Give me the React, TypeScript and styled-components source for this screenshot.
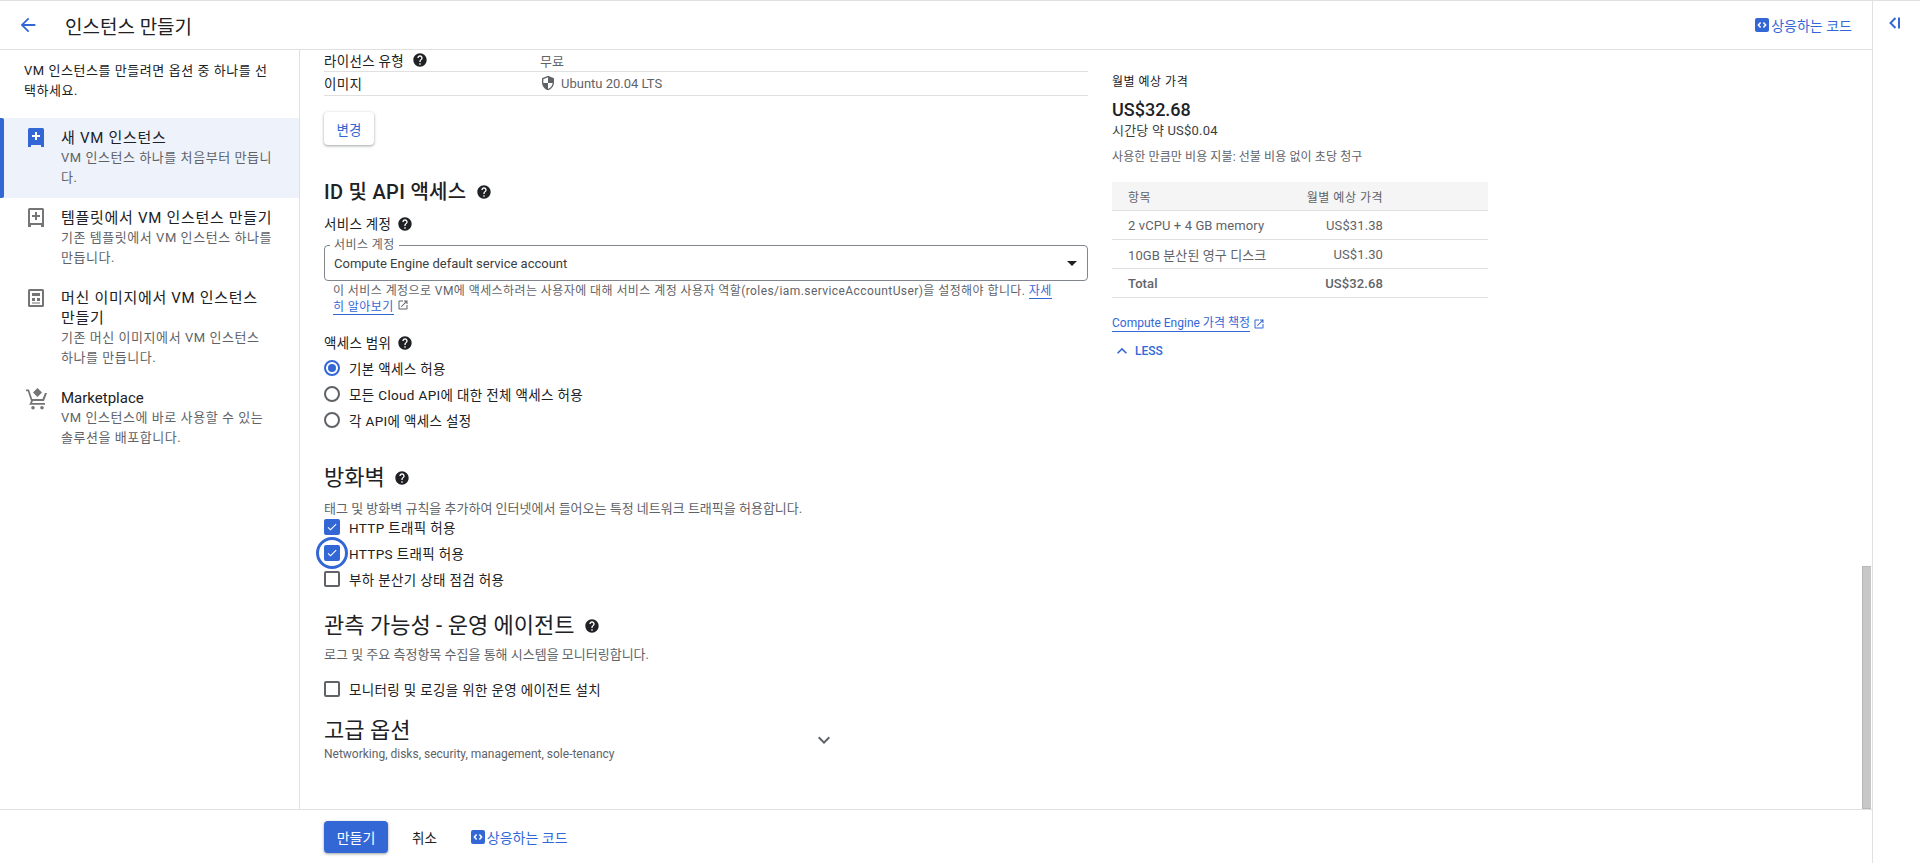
import styled, {createGlobalStyle} from 'styled-components';

const GlobalStyle = createGlobalStyle`
  html, body {
    margin: 0;
    height: 100%;
    overflow: hidden;
    background: #fff;
  }

  body {
    font-family: Roboto, "Noto Sans CJK KR", sans-serif;
    font-size: 13px;
    color: #202124;
  }
`;

const BLUE = '#3367d6';
const GREY = '#5f6368';
const LINE = '#e0e0e0';

const Page = styled.div`
  display: flex;
  height: 863px;
  border-top: 1px solid ${LINE};
  box-sizing: border-box;
`;

const Workspace = styled.div`
  flex: 1;
  min-width: 0;
  display: flex;
  flex-direction: column;
`;

const Rail = styled.aside`
  width: 44px;
  border-left: 1px solid ${LINE};
  display: flex;
  justify-content: center;
  padding: 15px 3px 0 0;
`;

const Header = styled.header`
  height: 48px;
  flex: none;
  display: flex;
  align-items: center;
  border-bottom: 1px solid ${LINE};
  padding: 0 20px 0 17px;
`;

const BackLink = styled.span`
  display: flex;
  width: 48px;
  color: ${BLUE};
`;

const PageTitle = styled.h1`
  flex: 1;
  margin: 0;
  font-size: 19px;
  font-weight: 400;
`;

const CodeLink = styled.span`
  display: flex;
  align-items: center;
  gap: 2px;
  color: ${BLUE};
  font-size: 14px;
`;

const Body = styled.div`
  flex: 1;
  min-height: 0;
  display: flex;
`;

const Nav = styled.nav`
  width: 299px;
  flex: none;
  border-right: 1px solid ${LINE};
`;

const NavIntro = styled.p`
  margin: 0;
  padding: 11px 24px 17px;
  font-size: 13px;
  line-height: 20px;
  letter-spacing: 0.55px;
`;

const NavItem = styled.div<{$active?: boolean}>`
  position: relative;
  display: flex;
  padding: 10px 24px;
  background: ${({$active}) => ($active ? '#eef2fb' : 'transparent')};

  ${({$active}) =>
    $active &&
    `
      &::before {
        content: '';
        position: absolute;
        left: 0;
        top: 0;
        bottom: 0;
        width: 4px;
        background: ${BLUE};
        border-radius: 0 2px 2px 0;
      }
    `}
`;

const NavIcon = styled.span<{$active?: boolean}>`
  width: 33px;
  flex: none;
  padding-left: 4px;
  color: ${({$active}) => ($active ? BLUE : '#757575')};
`;

const NavTitle = styled.div<{$latin?: boolean}>`
  font-size: 15px;
  line-height: 20px;
  letter-spacing: ${({$latin}) => ($latin ? 0 : '0.7px')};
  color: #202124;
`;

const NavDesc = styled.div`
  font-size: 13px;
  line-height: 20px;
  letter-spacing: 0.55px;
  color: ${GREY};
`;

const Content = styled.div`
  flex: 1;
  min-width: 0;
  display: flex;
`;

const Form = styled.main`
  width: 764px;
  flex: none;
  margin-left: 24px;
`;

const InfoRow = styled.div<{$height: number; $lift: number}>`
  display: grid;
  grid-template-columns: 216px 1fr;
  align-items: center;
  height: ${({$height}) => $height}px;
  padding-bottom: ${({$lift}) => $lift}px;
  box-sizing: border-box;
  border-bottom: 1px solid ${LINE};
  font-size: 13px;
`;

const InfoLabel = styled.span`
  display: flex;
  align-items: center;
  gap: 8px;
  font-size: 13.5px;
  letter-spacing: 0.3px;
`;

const InfoValue = styled.span`
  display: flex;
  align-items: center;
  gap: 5px;
  color: ${GREY};
`;

const RaisedButton = styled.button`
  display: block;
  margin-top: 16px;
  width: 50px;
  height: 33px;
  padding: 0;
  background: #fff;
  color: ${BLUE};
  border: none;
  border-radius: 4px;
  font: inherit;
  font-size: 13.5px;
  box-shadow: 0 1px 2px rgba(60, 64, 67, 0.3), 0 1px 3px 1px rgba(60, 64, 67, 0.15);
`;

const SectionTitle = styled.h2<{$top: number; $medium?: boolean}>`
  display: flex;
  align-items: center;
  gap: 9px;
  margin: ${({$top}) => $top}px 0 0;
  font-size: ${({$medium}) => ($medium ? 20 : 22)}px;
  line-height: 28px;
  font-weight: ${({$medium}) => ($medium ? 500 : 400)};
  letter-spacing: ${({$medium}) => ($medium ? '0.3px' : 0)};
`;

const FieldLabel = styled.div<{$top: number}>`
  display: flex;
  align-items: center;
  gap: 6px;
  margin-top: ${({$top}) => $top}px;
  font-size: 13.5px;
  line-height: 20px;
  letter-spacing: 0.3px;
`;

const SelectBox = styled.div`
  position: relative;
  display: flex;
  align-items: center;
  justify-content: space-between;
  height: 36px;
  margin-top: 11px;
  padding: 0 10px 0 9px;
  border: 1px solid #80868b;
  border-radius: 4px;
  box-sizing: border-box;
  font-size: 13px;
  color: #3c4043;
`;

const SelectLegend = styled.span`
  position: absolute;
  left: 5px;
  top: -7px;
  padding: 0 4px;
  background: #fff;
  font-size: 12px;
  line-height: 12px;
  letter-spacing: 0.4px;
  color: ${GREY};
`;

const Caret = styled.span`
  width: 0;
  height: 0;
  border-left: 5px solid transparent;
  border-right: 5px solid transparent;
  border-top: 5px solid #202124;
`;

const Hint = styled.p`
  margin: 2px 32px 0 9px;
  font-size: 12px;
  line-height: 16px;
  letter-spacing: 0.42px;
  color: ${GREY};
`;

const TextLink = styled.a`
  color: ${BLUE};
  border-bottom: 1px solid ${BLUE};
`;

const ChoiceList = styled.div<{$gap: number; $top: number}>`
  display: flex;
  flex-direction: column;
  gap: ${({$gap}) => $gap}px;
  margin-top: ${({$top}) => $top}px;
`;

const Choice = styled.label`
  display: flex;
  align-items: center;
  gap: 9px;
  height: 20px;
  font-size: 13.5px;
  letter-spacing: 0.35px;
`;

const Radio = styled.span<{$on?: boolean}>`
  width: 16px;
  height: 16px;
  flex: none;
  box-sizing: border-box;
  border-radius: 50%;
  border: 2px solid ${({$on}) => ($on ? BLUE : GREY)};
  display: flex;
  align-items: center;
  justify-content: center;

  &::after {
    content: '';
    width: 8px;
    height: 8px;
    border-radius: 50%;
    background: ${({$on}) => ($on ? BLUE : 'transparent')};
  }
`;

const CheckBox = styled.span<{$on?: boolean; $focus?: boolean}>`
  position: relative;
  width: 16px;
  height: 16px;
  flex: none;
  box-sizing: border-box;
  border-radius: 2px;
  border: 2px solid ${({$on}) => ($on ? BLUE : GREY)};
  background: ${({$on}) => ($on ? BLUE : '#fff')};
  color: #fff;
  display: flex;
  align-items: center;
  justify-content: center;

  ${({$focus}) =>
    $focus &&
    `
      &::after {
        content: '';
        position: absolute;
        left: -10px;
        top: -10px;
        width: 32px;
        height: 32px;
        box-sizing: border-box;
        border: 3px solid ${BLUE};
        border-radius: 50%;
      }
    `}
`;

const SectionDesc = styled.p<{$top: number}>`
  margin: ${({$top}) => $top}px 0 0;
  font-size: 13px;
  line-height: 16px;
  color: ${GREY};
`;

const Advanced = styled.div`
  display: grid;
  grid-template-columns: 1fr auto;
  width: 512px;
  margin-top: 18px;
`;

const AdvancedTitle = styled.div`
  font-size: 22px;
  line-height: 28px;
`;

const AdvancedSub = styled.div`
  margin-top: 1px;
  font-size: 12px;
  line-height: 16px;
  color: ${GREY};
  grid-column: 1;
`;

const Chevron = styled.span`
  grid-column: 2;
  grid-row: 1 / span 2;
  align-self: center;
  display: flex;
  color: ${GREY};
`;

const Summary = styled.aside`
  width: 376px;
  flex: none;
  margin-left: 24px;
  padding-top: 24px;
`;

const SummaryLabel = styled.div`
  font-size: 12px;
  line-height: 16px;
  letter-spacing: 0.5px;
`;

const SummaryPrice = styled.div`
  margin-top: 8px;
  font-size: 18px;
  line-height: 24px;
  font-weight: 500;
`;

const SummaryHourly = styled.div`
  font-size: 13px;
  line-height: 18px;
  letter-spacing: 0.2px;
  color: #3c4043;
`;

const SummaryNote = styled.div`
  margin-top: 9px;
  font-size: 12px;
  line-height: 16px;
  letter-spacing: 0.1px;
  color: ${GREY};
`;

const PriceTable = styled.table`
  width: 100%;
  margin-top: 17px;
  border-collapse: collapse;
  font-size: 13px;
  letter-spacing: 0.1px;
  color: ${GREY};
`;

const HeadCell = styled.th<{$right?: boolean}>`
  height: 28px;
  padding: 0 0 0 16px;
  background: #f5f5f5;
  border-bottom: 1px solid ${LINE};
  font-size: 12px;
  letter-spacing: 0.5px;
  font-weight: 400;
  text-align: ${({$right}) => ($right ? 'right' : 'left')};
`;

const Cell = styled.td<{$right?: boolean; $bold?: boolean}>`
  height: 28px;
  padding: 0 0 0 16px;
  border-bottom: 1px solid ${LINE};
  font-weight: ${({$bold}) => ($bold ? 500 : 400)};
  text-align: ${({$right}) => ($right ? 'right' : 'left')};
`;

const FillCell = styled.td`
  width: 103px;
  border-bottom: 1px solid ${LINE};
`;

const FillHead = styled.th`
  width: 103px;
  background: #f5f5f5;
  border-bottom: 1px solid ${LINE};
`;

const PriceLink = styled.div`
  display: flex;
  align-items: center;
  gap: 3px;
  margin-top: 17px;
  color: ${BLUE};
  font-size: 12px;
  line-height: 16px;
`;

const LessToggle = styled.div`
  display: flex;
  align-items: center;
  gap: 3px;
  margin-top: 9px;
  color: ${BLUE};
  font-size: 12px;
  font-weight: 500;
`;

const ScrollTrack = styled.div`
  margin-left: auto;
  margin-right: 1px;
  width: 9px;
  display: flex;
  align-items: flex-end;
`;

const ScrollThumb = styled.div`
  width: 100%;
  height: 243px;
  background: #c8c8c8;
  border: 1px solid #b8b8b8;
  border-width: 1px 0 1px 1px;
  box-sizing: border-box;
`;

const Footer = styled.footer`
  height: 53px;
  flex: none;
  display: flex;
  align-items: center;
  border-top: 1px solid ${LINE};
  padding-left: 324px;
`;

const PrimaryButton = styled.button`
  width: 64px;
  height: 32px;
  padding: 0;
  background: ${BLUE};
  color: #fff;
  border: none;
  border-radius: 4px;
  font: inherit;
  font-size: 14px;
  box-shadow: 0 1px 2px rgba(60, 64, 67, 0.3), 0 1px 3px 1px rgba(60, 64, 67, 0.15);
`;

const CancelLink = styled.span`
  margin: 0 34px 0 24px;
  font-size: 13.5px;
`;

const Icon = ({d, size = 24}: {d: string; size?: number}) => (
  <svg width={size} height={size} viewBox="0 0 24 24" fill="currentColor">
    <path d={d} />
  </svg>
);

const HELP =
  'M12 2C6.48 2 2 6.48 2 12s4.48 10 10 10 10-4.48 10-10S17.52 2 12 2zm1 17h-2v-2h2v2zm2.07-7.75l-.9.92C13.45 12.9 13 13.5 13 15h-2v-.5c0-1.1.45-2.1 1.17-2.83l1.24-1.26c.37-.36.59-.86.59-1.41 0-1.1-.9-2-2-2s-2 .9-2 2H8c0-2.21 1.79-4 4-4s4 1.79 4 4c0 .88-.36 1.68-.93 2.25z';
const BACK = 'M20 11H7.83l5.59-5.59L12 4l-8 8 8 8 1.41-1.41L7.83 13H20v-2z';
const SHIELD =
  'M12 1L3 5v6c0 5.55 3.84 10.74 9 12 5.16-1.26 9-6.45 9-12V5l-9-4zm0 10.99h7c-.53 4.12-3.28 7.79-7 8.94V12H5V6.3l7-3.11v8.8z';
const OPEN_NEW =
  'M19 19H5V5h7V3H5c-1.11 0-2 .9-2 2v14c0 1.1.89 2 2 2h14c1.1 0 2-.9 2-2v-7h-2v7zM14 3v2h3.59l-9.83 9.83 1.41 1.41L19 6.41V10h2V3h-7z';
const EXPAND_MORE = 'M16.59 8.59L12 13.17 7.41 8.59 6 10l6 6 6-6z';
const EXPAND_LESS = 'M12 8l-6 6 1.41 1.41L12 10.83l4.59 4.58L18 14z';
const CHECK = 'M9 16.17L4.83 12l-1.42 1.41L9 19 21 7l-1.41-1.41z';

const Help = ({size = 16}: {size?: number}) => <Icon d={HELP} size={size} />;

const CodeIcon = () => (
  <svg width="14" height="14" viewBox="0 0 14 14">
    <rect width="14" height="14" rx="2" fill={BLUE} />
    <path d="M5.6 4.6L3.4 7l2.2 2.4M8.4 4.6L10.6 7 8.4 9.4" fill="none" stroke="#fff" strokeWidth="1.5" />
  </svg>
);

const NewVmIcon = () => (
  <svg width="16" height="20" viewBox="0 0 16 20">
    <path d="M1.500 0h13A1.500 1.500 0 0 1 16 1.500V19h-3v-2H3v2H0V1.500A1.500 1.500 0 0 1 1.500 0z" fill="currentColor" />
    <path d="M7 4h2v3h3v2H9v3H7V9H4V7h3z" fill="#fff" />
  </svg>
);

const TemplateIcon = () => (
  <svg width="16" height="20" viewBox="0 0 16 20">
    <path
      d="M1.500 0h13A1.500 1.500 0 0 1 16 1.500V19h-3v-2H3v2H0V1.500A1.500 1.500 0 0 1 1.500 0zM2 2v13h12V2z"
      fill="currentColor"
      fillRule="evenodd"
    />
    <path d="M7 4h2v3h3v2H9v3H7V9H4V7h3z" fill="currentColor" />
  </svg>
);

const ImageIcon = () => (
  <svg width="16" height="20" viewBox="0 0 16 20">
    <path
      d="M1.500 1h13A1.500 1.500 0 0 1 16 2.500v15a1.500 1.500 0 0 1-1.500 1.500h-13A1.500 1.500 0 0 1 0 17.500v-15A1.500 1.500 0 0 1 1.500 1zM2 3v14h12V3z"
      fill="currentColor"
      fillRule="evenodd"
    />
    <path d="M4 5h8v3H4zM4 10h3v3H4zM9 10h3v3H9zM4 14.500h8v1H4z" fill="currentColor" />
  </svg>
);

const CartIcon = () => (
  <svg width="22" height="22" viewBox="0 0 22 22" style={{marginLeft: -2}}>
    <path d="M11.500 0l4.500 4.500-4.500 4.500L7 4.500z" fill="currentColor" />
    <path d="M0 1.500h3l3.200 9.500h10.300l2.500-6h2l-3 8H7l-1 2h13v1.800H3.200l1.800-3.800L1.800 3.300H0z" fill="currentColor" />
    <circle cx="7" cy="19.800" r="1.800" fill="currentColor" />
    <circle cx="16" cy="19.800" r="1.800" fill="currentColor" />
  </svg>
);

const Tick = () => <Icon d={CHECK} size={14} />;

export default function App() {
  return (
    <Page>
      <GlobalStyle />
      <Workspace>
        <Header>
          <BackLink>
            <Icon d={BACK} size={22} />
          </BackLink>
          <PageTitle>인스턴스 만들기</PageTitle>
          <CodeLink>
            <CodeIcon />
            상응하는 코드
          </CodeLink>
        </Header>
        <Body>
          <Nav>
            <NavIntro>VM 인스턴스를 만들려면 옵션 중 하나를 선택하세요.</NavIntro>
            <NavItem $active>
              <NavIcon $active>
                <NewVmIcon />
              </NavIcon>
              <div>
                <NavTitle>새 VM 인스턴스</NavTitle>
                <NavDesc>VM 인스턴스 하나를 처음부터 만듭니다.</NavDesc>
              </div>
            </NavItem>
            <NavItem>
              <NavIcon>
                <TemplateIcon />
              </NavIcon>
              <div>
                <NavTitle>템플릿에서 VM 인스턴스 만들기</NavTitle>
                <NavDesc>기존 템플릿에서 VM 인스턴스 하나를 만듭니다.</NavDesc>
              </div>
            </NavItem>
            <NavItem>
              <NavIcon>
                <ImageIcon />
              </NavIcon>
              <div>
                <NavTitle>머신 이미지에서 VM 인스턴스 만들기</NavTitle>
                <NavDesc>기존 머신 이미지에서 VM 인스턴스 하나를 만듭니다.</NavDesc>
              </div>
            </NavItem>
            <NavItem>
              <NavIcon>
                <CartIcon />
              </NavIcon>
              <div>
                <NavTitle $latin>Marketplace</NavTitle>
                <NavDesc>VM 인스턴스에 바로 사용할 수 있는 솔루션을 배포합니다.</NavDesc>
              </div>
            </NavItem>
          </Nav>
          <Content>
            <Form>
              <InfoRow $height={22} $lift={3}>
                <InfoLabel>
                  라이선스 유형 <Help />
                </InfoLabel>
                <InfoValue>무료</InfoValue>
              </InfoRow>
              <InfoRow $height={24} $lift={1}>
                <InfoLabel>이미지</InfoLabel>
                <InfoValue>
                  <Icon d={SHIELD} size={16} />
                  Ubuntu 20.04 LTS
                </InfoValue>
              </InfoRow>
              <RaisedButton>변경</RaisedButton>
              <SectionTitle $top={33} $medium>
                ID 및 API 액세스 <Help />
              </SectionTitle>
              <FieldLabel $top={8}>
                서비스 계정 <Help />
              </FieldLabel>
              <SelectBox>
                <SelectLegend>서비스 계정</SelectLegend>
                Compute Engine default service account
                <Caret />
              </SelectBox>
              <Hint>
                이 서비스 계정으로 VM에 액세스하려는 사용자에 대해 서비스 계정 사용자 역할(roles/iam.serviceAccountUser)을 설정해야 합니다.{' '}
                <TextLink>자세히 알아보기</TextLink> <Icon d={OPEN_NEW} size={12} />
              </Hint>
              <FieldLabel $top={18}>
                액세스 범위 <Help />
              </FieldLabel>
              <ChoiceList $gap={6} $top={5}>
                <Choice>
                  <Radio $on />
                  기본 액세스 허용
                </Choice>
                <Choice>
                  <Radio />
                  모든 Cloud API에 대한 전체 액세스 허용
                </Choice>
                <Choice>
                  <Radio />각 API에 액세스 설정
                </Choice>
              </ChoiceList>
              <SectionTitle $top={34}>
                방화벽 <Help />
              </SectionTitle>
              <SectionDesc $top={9}>태그 및 방화벽 규칙을 추가하여 인터넷에서 들어오는 특정 네트워크 트래픽을 허용합니다.</SectionDesc>
              <ChoiceList $gap={6} $top={0}>
                <Choice>
                  <CheckBox $on>
                    <Tick />
                  </CheckBox>
                  HTTP 트래픽 허용
                </Choice>
                <Choice>
                  <CheckBox $on $focus>
                    <Tick />
                  </CheckBox>
                  HTTPS 트래픽 허용
                </Choice>
                <Choice>
                  <CheckBox />
                  부하 분산기 상태 점검 허용
                </Choice>
              </ChoiceList>
              <SectionTitle $top={23}>
                관측 가능성 - 운영 에이전트 <Help />
              </SectionTitle>
              <SectionDesc $top={7}>로그 및 주요 측정항목 수집을 통해 시스템을 모니터링합니다.</SectionDesc>
              <ChoiceList $gap={0} $top={16}>
                <Choice>
                  <CheckBox />
                  모니터링 및 로깅을 위한 운영 에이전트 설치
                </Choice>
              </ChoiceList>
              <Advanced>
                <AdvancedTitle>고급 옵션</AdvancedTitle>
                <Chevron>
                  <Icon d={EXPAND_MORE} size={24} />
                </Chevron>
                <AdvancedSub>Networking, disks, security, management, sole-tenancy</AdvancedSub>
              </Advanced>
            </Form>
            <Summary>
              <SummaryLabel>월별 예상 가격</SummaryLabel>
              <SummaryPrice>US$32.68</SummaryPrice>
              <SummaryHourly>시간당 약 US$0.04</SummaryHourly>
              <SummaryNote>사용한 만큼만 비용 지불: 선불 비용 없이 초당 청구</SummaryNote>
              <PriceTable>
                <thead>
                  <tr>
                    <HeadCell>항목</HeadCell>
                    <HeadCell $right>월별 예상 가격</HeadCell>
                    <FillHead />
                  </tr>
                </thead>
                <tbody>
                  <tr>
                    <Cell>2 vCPU + 4 GB memory</Cell>
                    <Cell $right>US$31.38</Cell>
                    <FillCell />
                  </tr>
                  <tr>
                    <Cell>10GB 분산된 영구 디스크</Cell>
                    <Cell $right>US$1.30</Cell>
                    <FillCell />
                  </tr>
                  <tr>
                    <Cell $bold>Total</Cell>
                    <Cell $right $bold>
                      US$32.68
                    </Cell>
                    <FillCell />
                  </tr>
                </tbody>
              </PriceTable>
              <PriceLink>
                <TextLink>Compute Engine 가격 책정</TextLink>
                <Icon d={OPEN_NEW} size={12} />
              </PriceLink>
              <LessToggle>
                <Icon d={EXPAND_LESS} size={20} />
                LESS
              </LessToggle>
            </Summary>
            <ScrollTrack>
              <ScrollThumb />
            </ScrollTrack>
          </Content>
        </Body>
        <Footer>
          <PrimaryButton>만들기</PrimaryButton>
          <CancelLink>취소</CancelLink>
          <CodeLink>
            <CodeIcon />
            상응하는 코드
          </CodeLink>
        </Footer>
      </Workspace>
      <Rail>
        <svg width="14" height="14" viewBox="0 0 14 14">
          <path d="M7.500 2L2.500 7l5 5" fill="none" stroke={BLUE} strokeWidth="2" />
          <path d="M11 1.500v11" fill="none" stroke={BLUE} strokeWidth="2" />
        </svg>
      </Rail>
    </Page>
  );
}
